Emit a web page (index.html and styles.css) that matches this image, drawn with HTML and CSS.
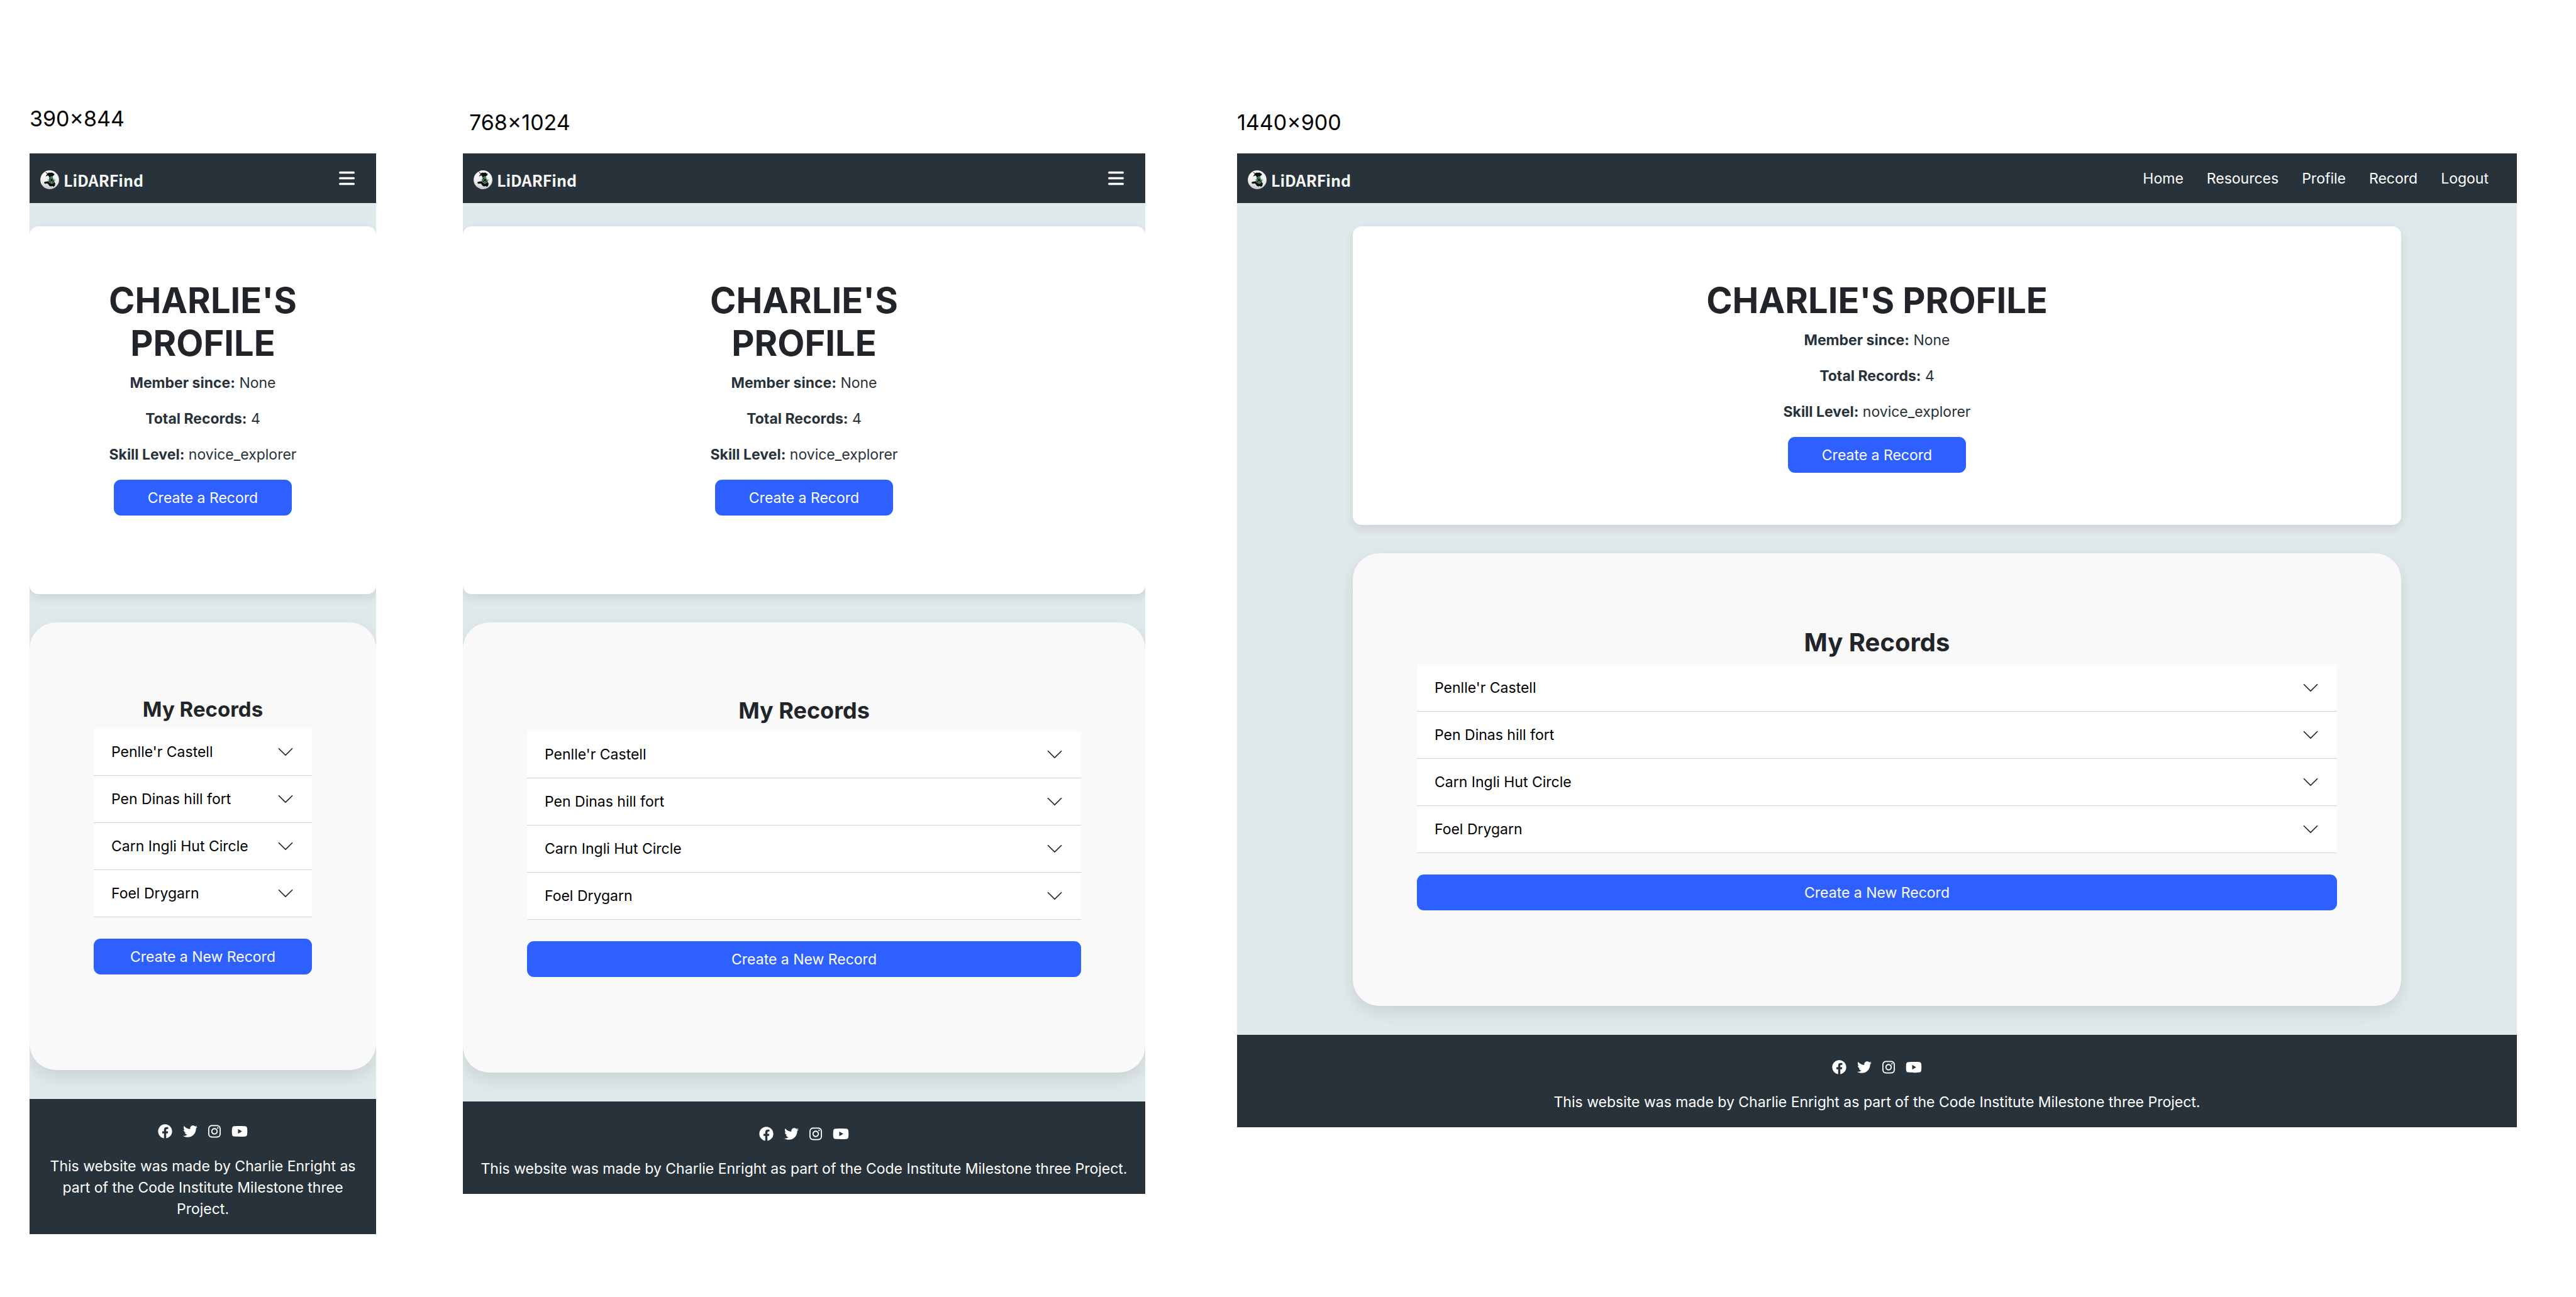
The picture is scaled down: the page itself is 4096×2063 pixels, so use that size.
FILE: index.html
```html
<!DOCTYPE html>
<html lang="en">
<head>
<meta charset="utf-8">
<title>LiDARFind – Profile</title>
<meta name="viewport" content="width=device-width, initial-scale=1">
<link rel="stylesheet" href="styles.css">
</head>
<body>
<svg class="sprite" aria-hidden="true">
  <defs>
    <linearGradient id="badge" x1="0" y1="0" x2="0" y2="1">
      <stop offset="0" stop-color="#ffffff"/>
      <stop offset="0.6" stop-color="#ececec"/>
      <stop offset="1" stop-color="#c9c9c9"/>
    </linearGradient>
  </defs>
  <symbol id="wales" viewBox="12 10 125 125">
    <circle cx="74.500" cy="72.500" r="62" fill="url(#badge)"/>
    <path fill="#04100f" d="M47 21l8 3 3 7 12-6 10 1 12-1 6 5 8 3-3 9-8 5-2 9 5 10 7 12 2 12 5 8-4 14-8 7-7-6-8 3-8-1-6-4-8-11-9-4-8 4-4-4-4-1 1-8 11-3 14-1 6-8 2-12-3-13-7-7-9 6-6 1 8-11 3-4z"/>
    <g fill="none">
      <circle cx="87" cy="74" r="20" stroke="#c4d3cf" stroke-width="4"/>
      <circle cx="87" cy="74" r="11" stroke="#a9bbb6" stroke-width="3"/>
      <path stroke="#2fae68" stroke-width="4" d="M87 48v20M87 80v20M60 74h20M94 74h20"/>
    </g>
  </symbol>
  <symbol id="bars" viewBox="0 0 448 512">
    <path fill="currentColor" d="M0 96C0 78.300 14.300 64 32 64H416c17.700 0 32 14.300 32 32s-14.300 32-32 32H32C14.300 128 0 113.700 0 96zM0 256c0-17.700 14.300-32 32-32H416c17.700 0 32 14.300 32 32s-14.300 32-32 32H32c-17.700 0-32-14.300-32-32zM448 416c0 17.700-14.300 32-32 32H32c-17.700 0-32-14.300-32-32s14.300-32 32-32H416c17.700 0 32 14.300 32 32z"/>
  </symbol>
  <symbol id="chevron" viewBox="0 0 16 16">
    <path fill="#212529" fill-rule="evenodd" d="M1.646 4.646a.5.5 0 0 1 .708 0L8 10.293l5.646-5.647a.5.5 0 0 1 .708.708l-6 6a.5.5 0 0 1-.708 0l-6-6a.5.5 0 0 1 0-.708z"/>
  </symbol>
  <symbol id="facebook" viewBox="0 0 512 512">
    <path fill="currentColor" d="M504 256C504 119 393 8 256 8S8 119 8 256c0 123.780 90.690 226.380 209.250 245V327.690h-63V256h63v-54.640c0-62.150 37-96.480 93.670-96.480 27.140 0 55.520 4.840 55.520 4.840v61h-31.280c-30.800 0-40.410 19.120-40.410 38.730V256h68.780l-11 71.690h-57.780V501C413.310 482.380 504 379.780 504 256z"/>
  </symbol>
  <symbol id="twitter" viewBox="0 0 512 512">
    <path fill="currentColor" d="M459.370 151.716c.325 4.548.325 9.097.325 13.645 0 138.720-105.583 298.558-298.558 298.558-59.452 0-114.680-17.219-161.137-47.106 8.447.974 16.568 1.299 25.340 1.299 49.055 0 94.213-16.568 130.274-44.832-46.132-.975-84.792-31.188-98.112-72.772 6.498.974 12.995 1.624 19.818 1.624 9.421 0 18.843-1.300 27.614-3.573-48.081-9.747-84.143-51.980-84.143-102.985v-1.299c13.969 7.797 30.214 12.670 47.431 13.319-28.264-18.843-46.781-51.005-46.781-87.391 0-19.492 5.197-37.360 14.294-52.954 51.655 63.675 129.300 105.258 216.365 109.807-1.624-7.797-2.599-15.918-2.599-24.040 0-57.828 46.782-104.934 104.934-104.934 30.213 0 57.502 12.670 76.670 33.137 23.715-4.548 46.456-13.320 66.599-25.340-7.798 24.366-24.366 44.833-46.132 57.827 21.117-2.273 41.584-8.122 60.426-16.243-14.292 20.791-32.161 39.308-52.628 54.253z"/>
  </symbol>
  <symbol id="instagram" viewBox="0 0 448 512">
    <path fill="currentColor" d="M224.100 141c-63.600 0-114.900 51.300-114.900 114.900s51.300 114.900 114.900 114.900S339 319.500 339 255.900 287.700 141 224.100 141zm0 189.600c-41.100 0-74.700-33.500-74.700-74.700s33.500-74.700 74.700-74.700 74.700 33.500 74.700 74.700-33.600 74.700-74.700 74.700zm146.400-194.300c0 14.900-12 26.800-26.800 26.800-14.900 0-26.800-12-26.800-26.800s12-26.800 26.800-26.800 26.800 12 26.800 26.800zm76.100 27.200c-1.700-35.900-9.900-67.700-36.200-93.900-26.200-26.200-58-34.400-93.900-36.200-37-2.100-147.900-2.100-184.900 0-35.800 1.700-67.600 9.900-93.900 36.100s-34.400 58-36.200 93.900c-2.100 37-2.100 147.900 0 184.900 1.700 35.900 9.900 67.700 36.200 93.900s58 34.400 93.900 36.200c37 2.100 147.900 2.100 184.900 0 35.900-1.700 67.700-9.900 93.900-36.200 26.200-26.200 34.400-58 36.200-93.900 2.100-37 2.100-147.800 0-184.800zM398.800 388c-7.800 19.600-22.900 34.700-42.600 42.600-29.500 11.700-99.500 9-132.100 9s-102.700 2.600-132.100-9c-19.600-7.800-34.700-22.900-42.600-42.600-11.700-29.500-9-99.500-9-132.100s-2.600-102.700 9-132.100c7.800-19.600 22.900-34.700 42.600-42.600 29.500-11.700 99.500-9 132.100-9s102.700-2.600 132.100 9c19.600 7.800 34.700 22.900 42.600 42.600 11.700 29.500 9 99.500 9 132.100s2.700 102.700-9 132.100z"/>
  </symbol>
  <symbol id="youtube" viewBox="0 0 576 512">
    <path fill="currentColor" d="M549.655 124.083c-6.281-23.650-24.787-42.276-48.284-48.597C458.781 64 288 64 288 64S117.220 64 74.629 75.486c-23.497 6.322-42.003 24.947-48.284 48.597-11.412 42.867-11.412 132.305-11.412 132.305s0 89.438 11.412 132.305c6.281 23.650 24.787 41.500 48.284 47.821C117.220 448 288 448 288 448s170.780 0 213.371-11.486c23.497-6.321 42.003-24.171 48.284-47.821 11.412-42.867 11.412-132.305 11.412-132.305s0-89.438-11.412-132.305zm-317.510 213.508V175.185l142.739 81.205-142.739 81.201z"/>
  </symbol>
</svg>

<div class="canvas">

  <section class="board board--mobile">
    <p class="board__label">390×844</p>
    <div class="screen">
      <header class="navbar">
        <a class="brand" href="#"><svg class="brand__logo" aria-hidden="true"><use href="#wales"/></svg>LiDARFind</a>
        <button class="menu" type="button" aria-label="Open menu"><svg class="menu__icon" aria-hidden="true"><use href="#bars"/></svg></button>
      </header>
      <main class="content">
        <div class="card profile">
          <h1 class="profile__name">CHARLIE'S PROFILE</h1>
          <p class="profile__fact"><strong>Member since:</strong> None</p>
          <p class="profile__fact"><strong>Total Records:</strong> 4</p>
          <p class="profile__fact"><strong>Skill Level:</strong> novice_explorer</p>
          <button class="btn profile__btn" type="button">Create a Record</button>
        </div>
        <div class="card records">
          <h2 class="records__title">My Records</h2>
          <ul class="accordion">
            <li><button class="accordion__row" type="button">Penlle'r Castell<svg class="accordion__icon" aria-hidden="true"><use href="#chevron"/></svg></button></li>
            <li><button class="accordion__row" type="button">Pen Dinas hill fort<svg class="accordion__icon" aria-hidden="true"><use href="#chevron"/></svg></button></li>
            <li><button class="accordion__row" type="button">Carn Ingli Hut Circle<svg class="accordion__icon" aria-hidden="true"><use href="#chevron"/></svg></button></li>
            <li><button class="accordion__row" type="button">Foel Drygarn<svg class="accordion__icon" aria-hidden="true"><use href="#chevron"/></svg></button></li>
          </ul>
          <button class="btn records__btn" type="button">Create a New Record</button>
        </div>
      </main>
      <footer class="footer">
        <div class="social">
          <a href="#" aria-label="Facebook"><svg class="social__icon" aria-hidden="true"><use href="#facebook"/></svg></a>
          <a href="#" aria-label="Twitter"><svg class="social__icon" aria-hidden="true"><use href="#twitter"/></svg></a>
          <a href="#" aria-label="Instagram"><svg class="social__icon social__icon--narrow" aria-hidden="true"><use href="#instagram"/></svg></a>
          <a href="#" aria-label="YouTube"><svg class="social__icon social__icon--wide" aria-hidden="true"><use href="#youtube"/></svg></a>
        </div>
        <p class="footer__text">This website was made by Charlie Enright as part of the Code Institute Milestone three Project.</p>
      </footer>
    </div>
  </section>

  <section class="board board--tablet">
    <p class="board__label">768×1024</p>
    <div class="screen">
      <header class="navbar">
        <a class="brand" href="#"><svg class="brand__logo" aria-hidden="true"><use href="#wales"/></svg>LiDARFind</a>
        <button class="menu" type="button" aria-label="Open menu"><svg class="menu__icon" aria-hidden="true"><use href="#bars"/></svg></button>
      </header>
      <main class="content">
        <div class="card profile">
          <h1 class="profile__name">CHARLIE'S PROFILE</h1>
          <p class="profile__fact"><strong>Member since:</strong> None</p>
          <p class="profile__fact"><strong>Total Records:</strong> 4</p>
          <p class="profile__fact"><strong>Skill Level:</strong> novice_explorer</p>
          <button class="btn profile__btn" type="button">Create a Record</button>
        </div>
        <div class="card records">
          <h2 class="records__title">My Records</h2>
          <ul class="accordion">
            <li><button class="accordion__row" type="button">Penlle'r Castell<svg class="accordion__icon" aria-hidden="true"><use href="#chevron"/></svg></button></li>
            <li><button class="accordion__row" type="button">Pen Dinas hill fort<svg class="accordion__icon" aria-hidden="true"><use href="#chevron"/></svg></button></li>
            <li><button class="accordion__row" type="button">Carn Ingli Hut Circle<svg class="accordion__icon" aria-hidden="true"><use href="#chevron"/></svg></button></li>
            <li><button class="accordion__row" type="button">Foel Drygarn<svg class="accordion__icon" aria-hidden="true"><use href="#chevron"/></svg></button></li>
          </ul>
          <button class="btn records__btn" type="button">Create a New Record</button>
        </div>
      </main>
      <footer class="footer">
        <div class="social">
          <a href="#" aria-label="Facebook"><svg class="social__icon" aria-hidden="true"><use href="#facebook"/></svg></a>
          <a href="#" aria-label="Twitter"><svg class="social__icon" aria-hidden="true"><use href="#twitter"/></svg></a>
          <a href="#" aria-label="Instagram"><svg class="social__icon social__icon--narrow" aria-hidden="true"><use href="#instagram"/></svg></a>
          <a href="#" aria-label="YouTube"><svg class="social__icon social__icon--wide" aria-hidden="true"><use href="#youtube"/></svg></a>
        </div>
        <p class="footer__text">This website was made by Charlie Enright as part of the Code Institute Milestone three Project.</p>
      </footer>
    </div>
  </section>

  <section class="board board--desktop">
    <p class="board__label">1440×900</p>
    <div class="screen">
      <header class="navbar">
        <a class="brand" href="#"><svg class="brand__logo" aria-hidden="true"><use href="#wales"/></svg>LiDARFind</a>
        <nav class="links">
          <a class="links__item" href="#">Home</a>
          <a class="links__item" href="#">Resources</a>
          <a class="links__item" href="#">Profile</a>
          <a class="links__item" href="#">Record</a>
          <a class="links__item" href="#">Logout</a>
        </nav>
      </header>
      <main class="content">
        <div class="card profile">
          <h1 class="profile__name">CHARLIE'S PROFILE</h1>
          <p class="profile__fact"><strong>Member since:</strong> None</p>
          <p class="profile__fact"><strong>Total Records:</strong> 4</p>
          <p class="profile__fact"><strong>Skill Level:</strong> novice_explorer</p>
          <button class="btn profile__btn" type="button">Create a Record</button>
        </div>
        <div class="card records">
          <h2 class="records__title">My Records</h2>
          <ul class="accordion">
            <li><button class="accordion__row" type="button">Penlle'r Castell<svg class="accordion__icon" aria-hidden="true"><use href="#chevron"/></svg></button></li>
            <li><button class="accordion__row" type="button">Pen Dinas hill fort<svg class="accordion__icon" aria-hidden="true"><use href="#chevron"/></svg></button></li>
            <li><button class="accordion__row" type="button">Carn Ingli Hut Circle<svg class="accordion__icon" aria-hidden="true"><use href="#chevron"/></svg></button></li>
            <li><button class="accordion__row" type="button">Foel Drygarn<svg class="accordion__icon" aria-hidden="true"><use href="#chevron"/></svg></button></li>
          </ul>
          <button class="btn records__btn" type="button">Create a New Record</button>
        </div>
      </main>
      <footer class="footer">
        <div class="social">
          <a href="#" aria-label="Facebook"><svg class="social__icon" aria-hidden="true"><use href="#facebook"/></svg></a>
          <a href="#" aria-label="Twitter"><svg class="social__icon" aria-hidden="true"><use href="#twitter"/></svg></a>
          <a href="#" aria-label="Instagram"><svg class="social__icon social__icon--narrow" aria-hidden="true"><use href="#instagram"/></svg></a>
          <a href="#" aria-label="YouTube"><svg class="social__icon social__icon--wide" aria-hidden="true"><use href="#youtube"/></svg></a>
        </div>
        <p class="footer__text">This website was made by Charlie Enright as part of the Code Institute Milestone three Project.</p>
      </footer>
    </div>
  </section>

</div>
</body>
</html>
```
FILE: styles.css
```css
*,
*::before,
*::after {
  box-sizing: border-box;
}

body {
  margin: 0;
  background: #ffffff;
  color: #212529;
  font-family: Inter, "Liberation Sans", sans-serif;
  font-size: 23px;
  line-height: 34px;
}

h1, h2, p, ul {
  margin: 0;
  padding: 0;
}

button {
  border: 0;
  font: inherit;
  cursor: pointer;
}

a {
  color: inherit;
  text-decoration: none;
}

.sprite {
  position: absolute;
  width: 0;
  height: 0;
}

/* Three boards side by side, widths in the ratio of the screens they show */
.canvas {
  display: flex;
  align-items: flex-start;
  gap: 138px;
  padding: 168px 94px 99px 47px;
}

.board {
  flex: 551 1 0;
  min-width: 0;
}

.board--tablet {
  flex-grow: 1085;
}

.board--desktop {
  flex-grow: 2035;
  margin-left: 8px;
}

.board__label {
  margin-bottom: 34px;
  color: #000000;
  font-size: 34px;
  line-height: 42px;
}

.board--tablet .board__label,
.board--desktop .board__label {
  padding-top: 6px;
  margin-bottom: 28px;
}

.board--tablet .board__label {
  padding-left: 10px;
}

.screen {
  overflow: hidden;
  background: #e0e9eb;
}

/* Navigation */
.navbar {
  display: flex;
  align-items: center;
  justify-content: space-between;
  height: 79px;
  padding: 0 34px 0 17px;
  background: #28323a;
  color: #ffffff;
}

.brand {
  display: flex;
  align-items: center;
  gap: 7px;
  padding-top: 4px;
  color: #f5f5f5;
  font-family: "Noto Sans CJK SC", "Noto Sans", sans-serif;
  font-size: 25px;
  font-weight: 700;
}

.brand__logo {
  width: 30px;
  height: 30px;
}

.menu {
  display: flex;
  padding: 0;
  background: none;
  color: inherit;
}

.menu__icon {
  width: 25px;
  height: 29px;
}

.links {
  display: flex;
  gap: 37px;
  padding-right: 11px;
}

/* Cards */
.content {
  display: flex;
  flex-direction: column;
  gap: 45px;
  padding: 37px 0 46px;
}

.board--desktop .content {
  padding-left: 184px;
  padding-right: 184px;
}

.card {
  display: flex;
  flex-direction: column;
}

.profile {
  align-items: center;
  padding: 84px 34px 125px;
  border-radius: 14px;
  background: #ffffff;
  box-shadow: 0 6px 17px rgba(0, 0, 0, 0.1);
  text-align: center;
}

.board--desktop .profile {
  padding-bottom: 83px;
}

.profile__name {
  max-width: 424px;
  margin-bottom: 12px;
  font-size: 56px;
  font-weight: 700;
  line-height: 68px;
}

.board--desktop .profile__name {
  max-width: none;
}

.profile__fact {
  margin-bottom: 23px;
  color: #28323a;
}

.btn {
  height: 57px;
  border-radius: 11px;
  background: #2d60ff;
  color: #ffffff;
}

.profile__btn {
  width: 283px;
}

.records {
  padding: 118px 102px 152px;
  border-radius: 42px;
  background: #f9f9f9;
  box-shadow: 0 11px 28px rgba(0, 0, 0, 0.1);
}

.records__title {
  margin-bottom: 11px;
  font-size: 33px;
  font-weight: 700;
  line-height: 40px;
  text-align: center;
}

.board--tablet .records__title {
  font-size: 36px;
  line-height: 44px;
}

.board--desktop .records__title {
  font-size: 40px;
  line-height: 48px;
}

.accordion {
  margin-bottom: 34px;
  list-style: none;
}

.accordion__row {
  display: flex;
  align-items: center;
  justify-content: space-between;
  width: 100%;
  height: 75px;
  padding: 0 28px;
  border-bottom: 1px solid #d0d5d8;
  background: #ffffff;
  color: #000000;
  text-align: left;
}

.accordion__icon {
  flex: none;
  width: 28px;
  height: 28px;
}

/* Footer */
.footer {
  padding: 34px 17px 23px;
  background: #28323a;
  color: #ffffff;
  text-align: center;
}

.social {
  display: flex;
  justify-content: center;
  align-items: center;
  gap: 17px;
  height: 34px;
  margin-bottom: 22px;
}

.social a {
  display: flex;
}

.social__icon {
  width: 23px;
  height: 23px;
}

.social__icon--narrow {
  width: 20px;
}

.social__icon--wide {
  width: 26px;
}
```
